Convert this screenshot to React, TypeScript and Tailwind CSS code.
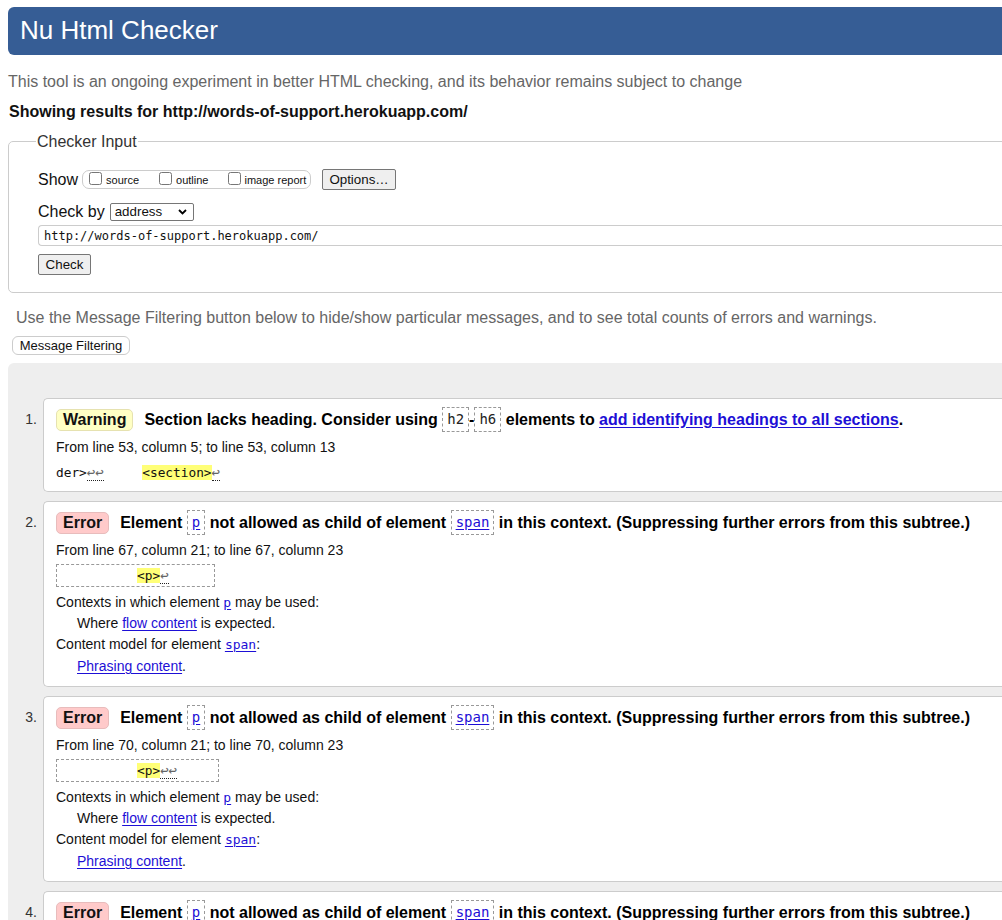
import React from "react";

function Code({ children, link }: { children: string; link?: boolean }) {
  return (
    <code
      className={`inline-block align-top border border-dashed border-[#999] px-[4px] font-['DejaVu_Sans_Mono','Liberation_Mono',monospace] text-[14px] font-normal leading-[23px] ${
        link ? "text-[#1d0fd6] underline underline-offset-2" : "text-[#222]"
      }`}
    >
      {children}
    </code>
  );
}

function Lf({ n = 1 }: { n?: number }) {
  return (
    <span className="border-b border-dotted border-[#222] text-[14px] text-[#666]">{"↩".repeat(n)}</span>
  );
}

function Hl({ children }: { children: string }) {
  return <span className="bg-[#ffff77]">{children}</span>;
}

function A({ children, mono }: { children: string; mono?: boolean }) {
  return (
    <a
      href="#"
      className={`text-[#1d0fd6] underline underline-offset-2 ${
        mono ? "font-['DejaVu_Sans_Mono','Liberation_Mono',monospace] text-[13px]" : ""
      }`}
    >
      {children}
    </a>
  );
}

function Badge({ kind }: { kind: "Warning" | "Error" }) {
  return (
    <span
      className={`mr-[11px] inline-flex h-[22px] items-center rounded-[5px] border px-[6px] text-[16px] font-bold ${
        kind === "Warning" ? "border-[#e6e2b0] bg-[#ffffc4]" : "border-[#e8bcbc] bg-[#ffcaca]"
      }`}
    >
      {kind}
    </span>
  );
}

function ElementError({ line, lfs, width }: { line: number; lfs: number; width: string }) {
  return (
    <>
      <div className="flex h-[25px] items-center">
        <Badge kind="Error" />
        <span className="text-[16px] font-bold leading-[25px] text-black">
          Element <Code link>p</Code> not allowed as child of element <Code link>span</Code> in this
          context. (Suppressing further errors from this subtree.)
        </span>
      </div>
      <p className="mt-[5px] h-[20px] text-[14px] leading-[20px]">
        From line {line}, column 21; to line {line}, column 23
      </p>
      <div
        className={`mt-[4px] h-[23px] border border-dashed border-[#999] pl-[3px] font-['DejaVu_Sans_Mono','Liberation_Mono',monospace] text-[12.8px] leading-[21px] whitespace-pre ${width}`}
      >
        {"          "}
        <Hl>{"<p>"}</Hl>
        <Lf n={lfs} />
      </div>
      <p className="mt-[5px] h-[20px] text-[14px] leading-[20px]">
        Contexts in which element <A mono>p</A> may be used:
      </p>
      <p className="h-[22px] pl-[21px] text-[14px] leading-[22px]">
        Where <A>flow content</A> is expected.
      </p>
      <p className="h-[21px] text-[14px] leading-[21px]">
        Content model for element <A mono>span</A>:
      </p>
      <p className="h-[22px] pl-[21px] text-[14px] leading-[22px]">
        <A>Phrasing content</A>.
      </p>
    </>
  );
}

function Item({ n, children }: { n: number; children: React.ReactNode }) {
  return (
    <li className="flex">
      <div className="w-[35px] shrink-0 pt-[11px] pr-[6px] text-right text-[14px] leading-[20px] text-[#333]">
        {n}.
      </div>
      <div className="flex-1 rounded-l-[5px] border border-r-0 border-[#ccc] bg-white pt-[8px] pb-[9px] pl-[12px] text-[#111]">
        {children}
      </div>
    </li>
  );
}

export default function App() {
  return (
    <div className="h-[920px] w-[1002px] overflow-hidden bg-white font-['Liberation_Sans',Arial,sans-serif] text-[#111]">
      <div className="w-[1120px]">
        <h1 className="mt-[7px] ml-2 h-[48px] rounded-l-[6px] bg-[#365d95] pl-3 text-[26px] leading-[47px] text-white">
          Nu Html Checker
        </h1>
        <p className="mt-[17px] ml-2 text-[16px] leading-[19px] text-[#666]">
          This tool is an ongoing experiment in better HTML checking, and its behavior remains subject
          to change
        </p>
        <p className="mt-[11px] ml-[9px] text-[16px] font-bold leading-[19px]">
          Showing results for http://words-of-support.herokuapp.com/
        </p>

        <fieldset className="mt-[11px] ml-2 rounded-[5px] border border-[#ccc] pb-[17px] pl-[29px]">
          <legend className="-ml-[2px] px-[1px] text-[16px] leading-[19px] text-[#333]">
            Checker Input
          </legend>
          <div className="mt-[18px] flex h-[21px] items-center">
            <span className="text-[16px] leading-[19px]">Show</span>
            <div className="ml-[4px] flex h-[19px] w-[229px] items-center rounded-[7px] border border-[#ccc] pl-[6px] text-[11px]">
              <input type="checkbox" className="m-0 h-[13px] w-[13px] -translate-y-[1px]" />
              <span className="ml-[4px] translate-y-[1px]">source</span>
              <input type="checkbox" className="m-0 ml-[20px] h-[13px] w-[13px] -translate-y-[1px]" />
              <span className="ml-[4px] translate-y-[1px]">outline</span>
              <input type="checkbox" className="m-0 ml-[20px] h-[13px] w-[13px] -translate-y-[1px]" />
              <span className="ml-[3px] translate-y-[1px]">image report</span>
            </div>
            <button className="ml-[11px] h-[21px] w-[74px] rounded-[2px] border border-[#767676] bg-[#efefef] text-[13.33px] leading-[19px]">
              Options…
            </button>
          </div>
          <div className="mt-[13px] flex h-[18px] items-center">
            <span className="-translate-y-[1px] text-[16px] leading-[19px]">Check by</span>
            <div className="ml-[5px] flex h-[18px] w-[84px] items-center justify-between rounded-[2px] border border-[#767676] pr-[6px] pl-[4px] text-[13.33px]">
              <span>address</span>
              <svg width="9" height="6" viewBox="0 0 9 6">
                <polyline points="1,1 4.5,4.5 8,1" fill="none" stroke="#000" strokeWidth="1.8" />
              </svg>
            </div>
          </div>
          <div className="mt-[4px] flex h-[21px] items-center rounded-l-[4px] border border-r-0 border-[#ccc] pl-[5px] font-['DejaVu_Sans_Mono','Liberation_Mono',monospace] text-[12px]">
            http://words-of-support.herokuapp.com/
          </div>
          <button className="mt-[8px] block h-[21px] w-[53px] rounded-[2px] border border-[#767676] bg-[#efefef] text-[13.33px] leading-[19px]">
            Check
          </button>
        </fieldset>

        <p className="mt-[15px] ml-4 text-[16px] leading-[19px] text-[#666]">
          Use the Message Filtering button below to hide/show particular messages, and to see total
          counts of errors and warnings.
        </p>
        <button className="mt-[9px] ml-3 block h-[19px] w-[118px] rounded-[6px] border border-[#ccc] bg-white text-[13px] leading-[17px]">
          Message Filtering
        </button>

        <div className="mt-[8px] ml-2 rounded-tl-[6px] bg-[#eeeeee] pt-[35px] pb-6">
          <ol className="flex flex-col gap-[9px]">
            <Item n={1}>
              <div className="flex h-[25px] items-center">
                <Badge kind="Warning" />
                <span className="text-[16px] font-bold leading-[25px] text-black">
                  Section lacks heading. Consider using <Code>h2</Code>-<Code>h6</Code> elements to{" "}
                  <A>add identifying headings to all sections</A>.
                </span>
              </div>
              <p className="mt-[5px] h-[20px] text-[14px] leading-[20px]">
                From line 53, column 5; to line 53, column 13
              </p>
              <p className="mt-[5px] h-[20px] font-['DejaVu_Sans_Mono','Liberation_Mono',monospace] text-[12.8px] leading-[20px] whitespace-pre">
                {"der>"}
                <Lf n={2} />
                {"     "}
                <Hl>{"<section>"}</Hl>
                <Lf />
              </p>
            </Item>
            <Item n={2}>
              <ElementError line={67} lfs={1} width="w-[159px]" />
            </Item>
            <Item n={3}>
              <ElementError line={70} lfs={2} width="w-[163px]" />
            </Item>
            <Item n={4}>
              <ElementError line={73} lfs={1} width="w-[159px]" />
            </Item>
          </ol>
        </div>
      </div>
    </div>
  );
}
